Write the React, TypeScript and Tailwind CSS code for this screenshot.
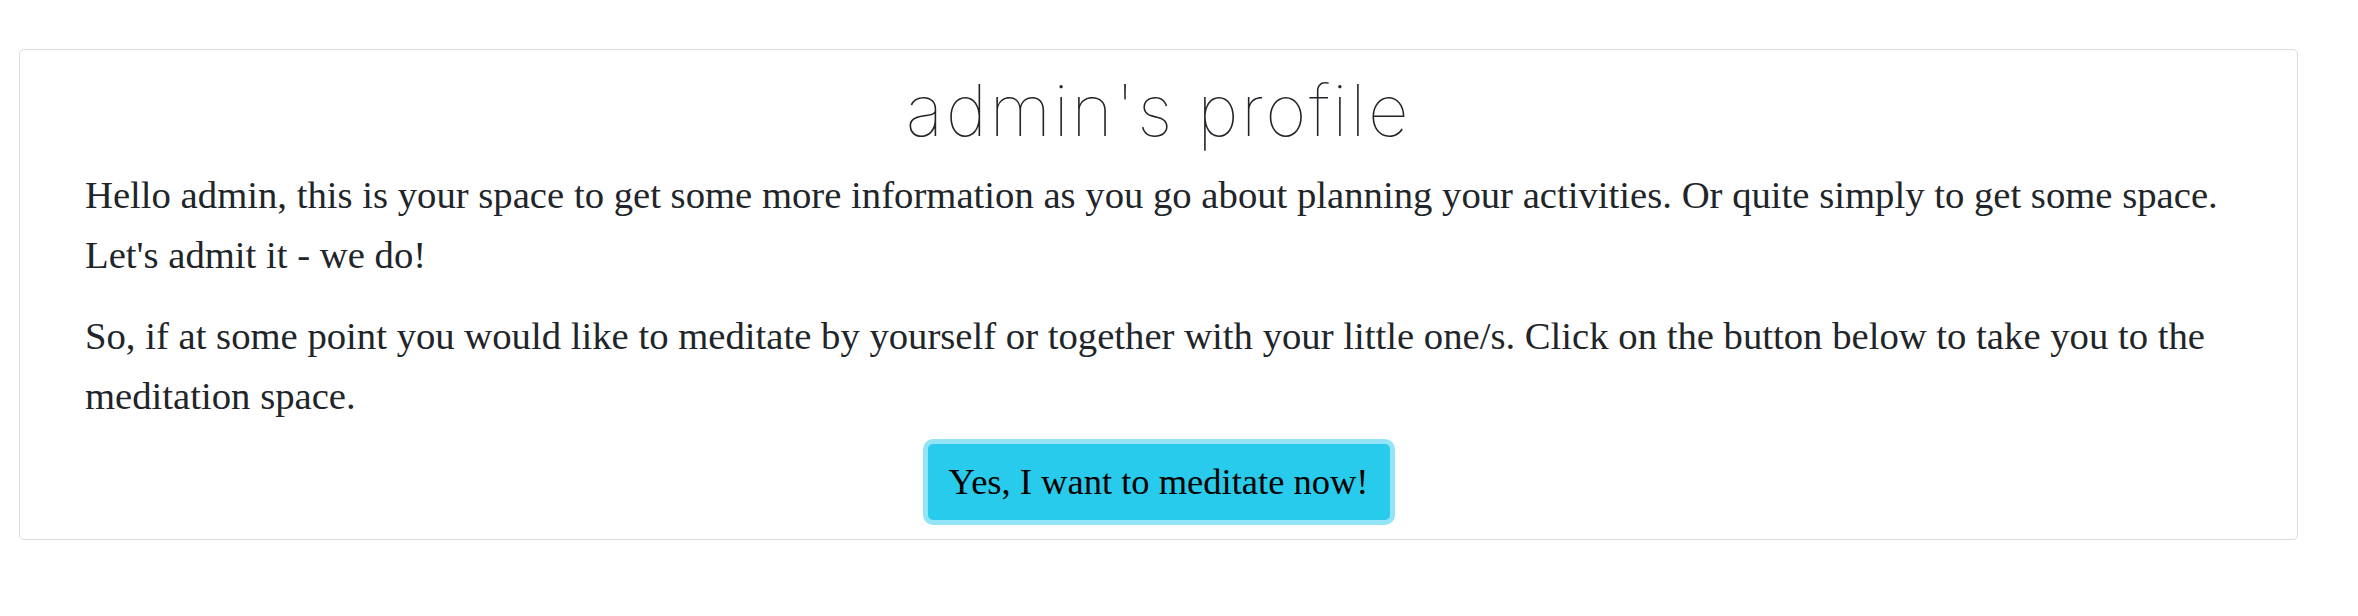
import React from 'react'

export default function App() {
  return (
    <div className="min-h-[616px] w-[2358px] bg-white pt-[49px]">
      <div className="ml-[19px] w-[2279px] rounded-[5px] border border-[#dddddd] bg-white px-[65px] pt-[18px] pb-[19px] font-['Liberation_Serif',serif] text-[#212529]">
        <h1 className="text-center font-['Inter',sans-serif] text-[71px] font-thin leading-[84px] tracking-[2.5px] text-[#212529]">
          admin's profile
        </h1>
        <p className="mt-[14px] text-[38.7px] leading-[59.5px]">
          Hello admin, this is your space to get some more information as you go about planning your activities. Or quite simply to get some space. Let's admit it - we do!
        </p>
        <p className="mt-[22px] text-[38.7px] leading-[59.5px]">
          So, if at some point you would like to meditate by yourself or together with your little one/s. Click on the button below to take you to the meditation space.
        </p>
        <div className="mt-[18px] flex justify-center">
          <button className="h-[76px] w-[462px] rounded-[5px] bg-[#29cbec] text-[36.5px] leading-none text-black shadow-[0_0_0_5px_#93e4f7]">
            Yes, I want to meditate now!
          </button>
        </div>
      </div>
    </div>
  )
}
